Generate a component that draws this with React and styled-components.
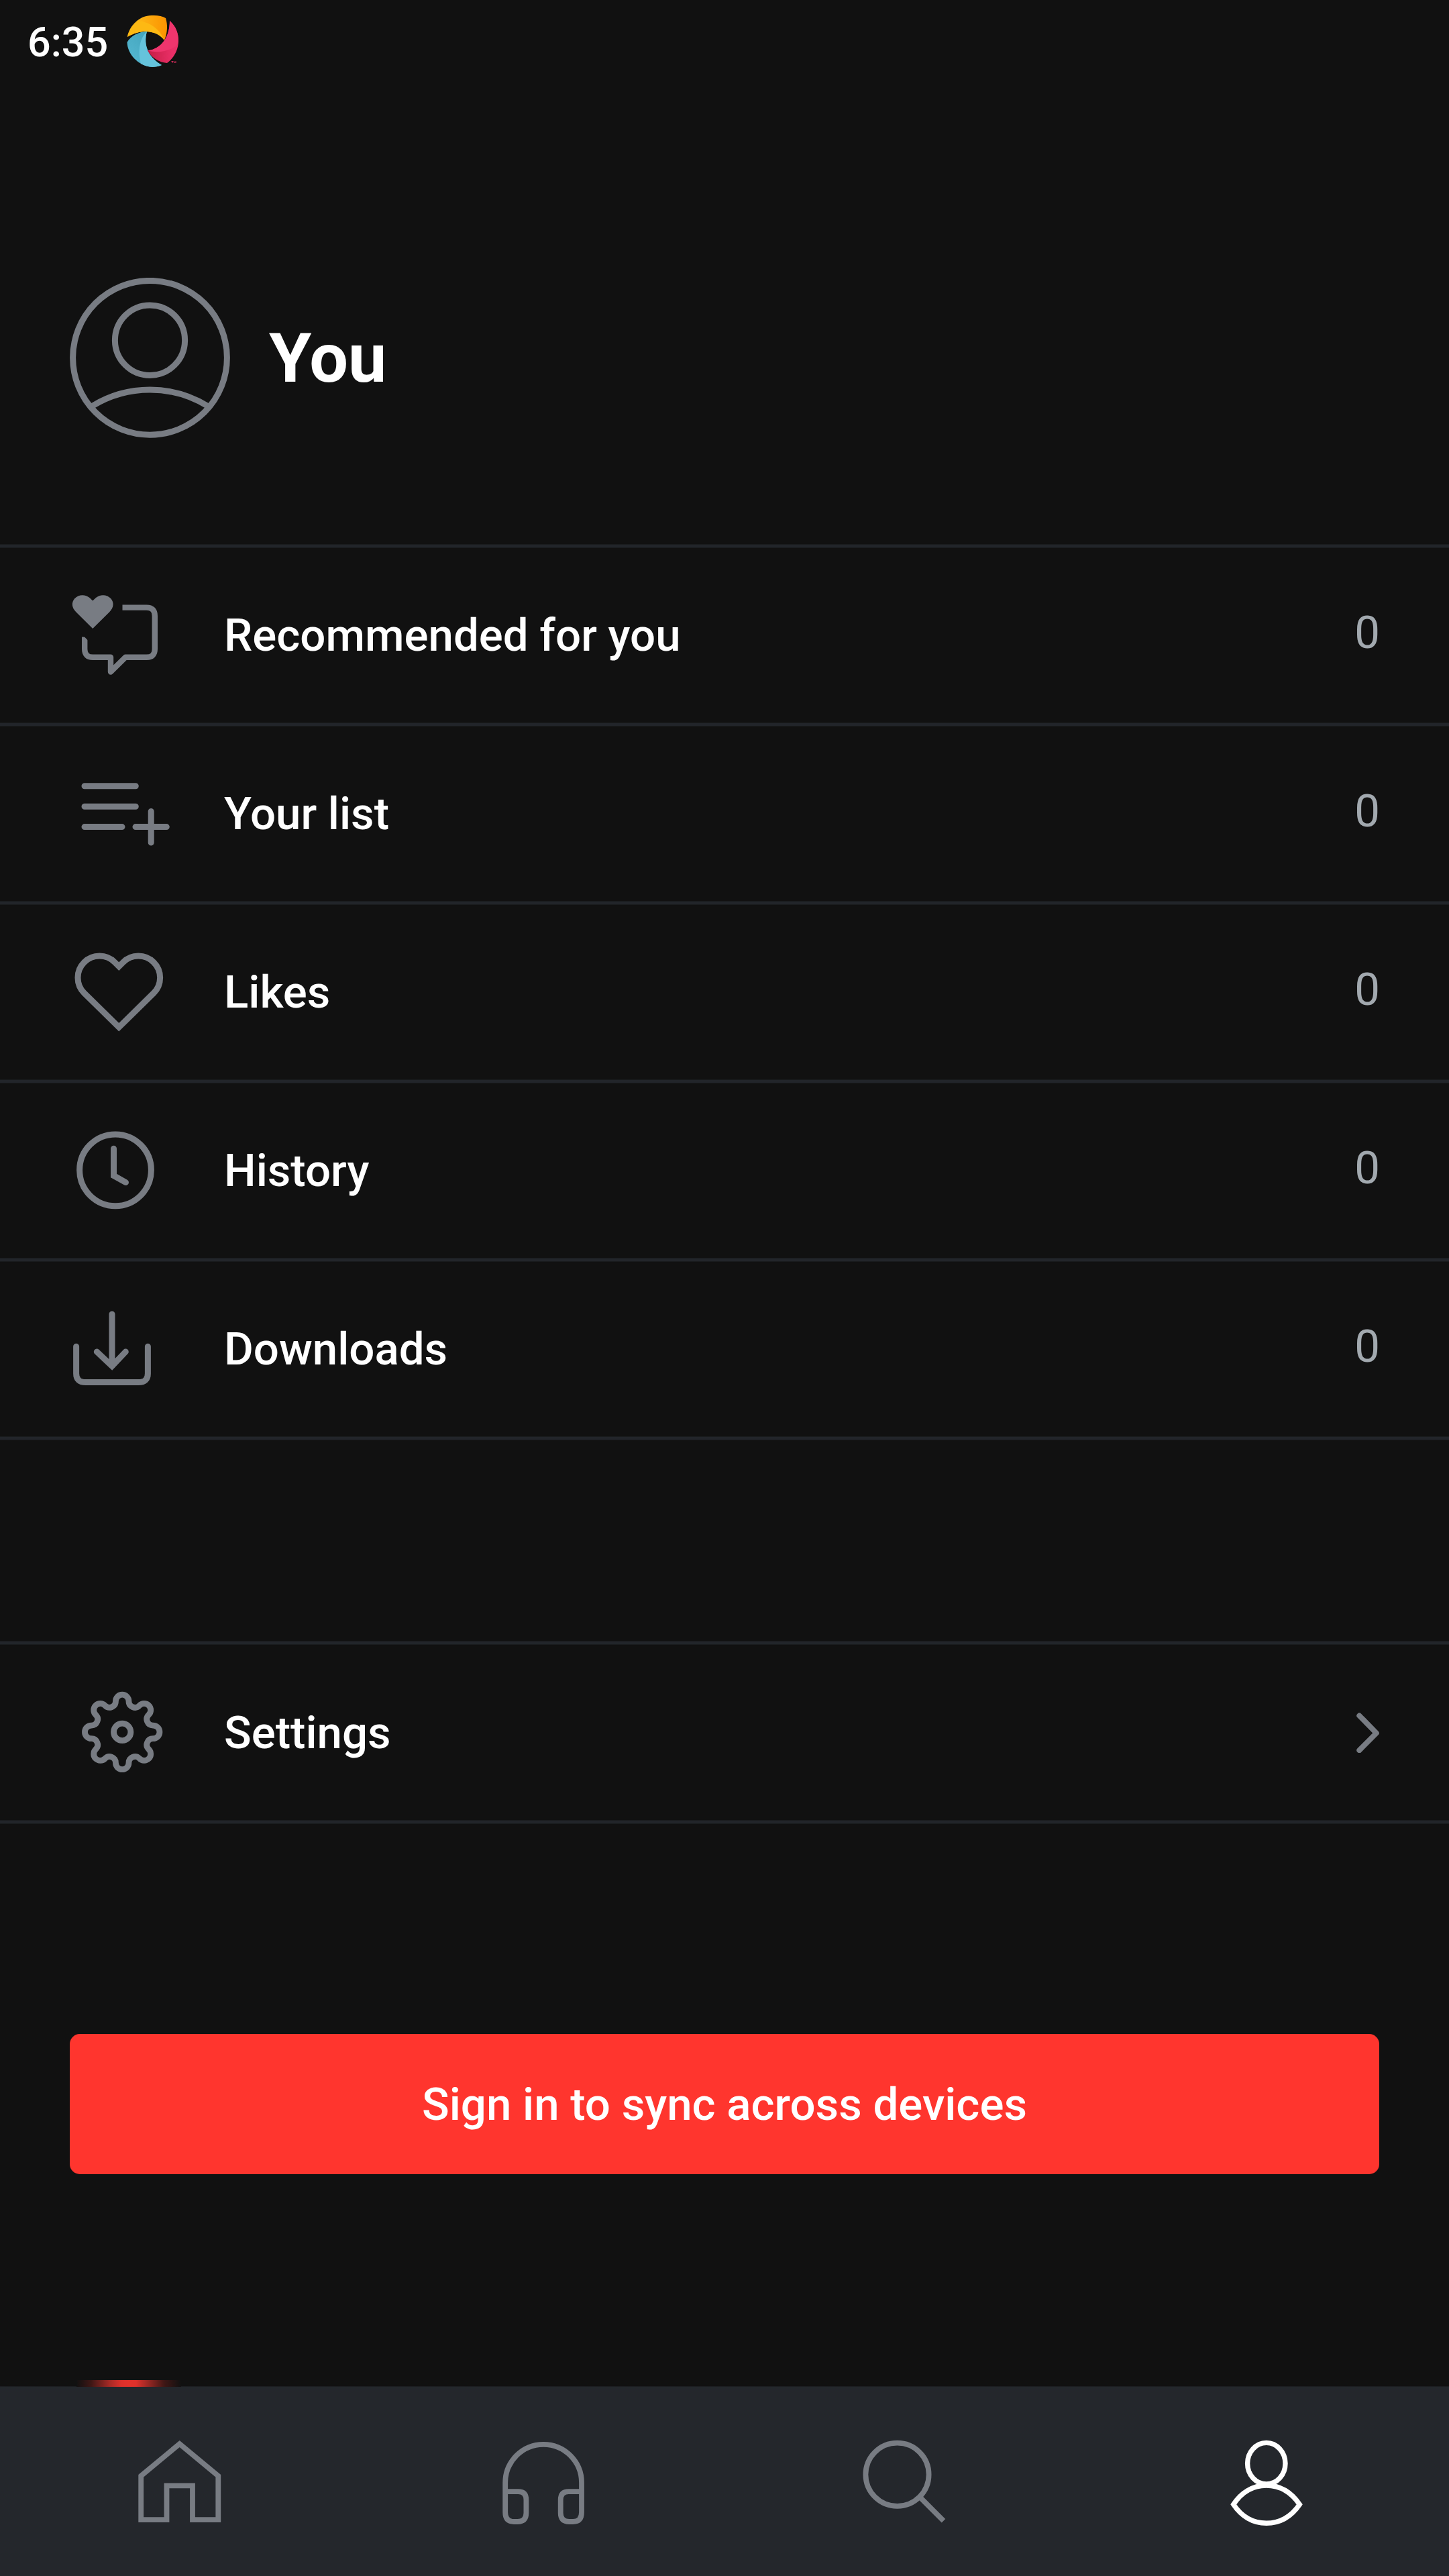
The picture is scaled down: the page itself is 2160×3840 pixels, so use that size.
import React from "react";
import styled, { createGlobalStyle } from "styled-components";

const GlobalStyle = createGlobalStyle`
  * { box-sizing: border-box; }
  body { margin: 0; background: #111111; }
`;

const Screen = styled.div`
  display: flex;
  flex-direction: column;
  width: 2160px;
  height: 3840px;
  overflow: hidden;
  background: #111111;
  color: #ffffff;
  font-family: Roboto, "Noto Sans", sans-serif;
`;

const StatusBar = styled.header`
  display: flex;
  align-items: center;
  flex: none;
  gap: 25px;
  height: 122px;
  padding-left: 41px;
`;

const Clock = styled.time`
  width: 122px;
  padding-top: 4px;
  font-size: 61px;
  font-weight: 500;
  line-height: 72px;
  white-space: nowrap;
`;

const Profile = styled.section`
  display: flex;
  align-items: center;
  flex: none;
  height: 689px;
  padding: 134px 104px 0;
  gap: 58px;
`;

const ProfileName = styled.h1`
  margin: 0;
  font-size: 102.4px;
  font-weight: 700;
  line-height: 120px;
`;

const Menu = styled.nav`
  display: flex;
  flex-direction: column;
  flex: none;
  margin-bottom: ${(p) => p.$gap}px;
`;

const Divider = styled.div`
  height: 6px;
  background: #22252a;
  border-top: 1px solid #191b1d;
  border-bottom: 1px solid #191b1d;
`;

const Row = styled.div`
  display: flex;
  align-items: center;
  height: ${(p) => p.$height || 260}px;
  padding: 0 103px 0 90px;
`;

const RowLabel = styled.span`
  flex: 1;
  padding-left: 44px;
  font-size: 67.2px;
  font-weight: 500;
  line-height: 80px;
`;

const Count = styled.span`
  padding-bottom: 9px;
  font-size: 67.2px;
  line-height: 80px;
  color: #a2a9af;
`;

const Icon = styled.svg`
  display: block;
  flex: none;
  fill: none;
  stroke: ${(p) => p.$color || "#787c83"};
  stroke-width: ${(p) => p.$weight || 9};
`;

const SignInButton = styled.button`
  flex: none;
  height: 209px;
  margin: 0 104px;
  padding: 0;
  border: 0;
  border-radius: 15px;
  background: #ff352e;
  color: #ffffff;
  font-family: inherit;
  font-size: 67.2px;
  font-weight: 500;
  line-height: 80px;
`;

const Glow = styled.div`
  flex: none;
  z-index: 1;
  width: 156px;
  height: 10px;
  margin: auto 0 -1px 114px;
  background: linear-gradient(
    90deg,
    #111111 0%,
    #3e1715 14%,
    #a82a26 32%,
    #dd302b 43%,
    #e2312b 50%,
    #dd302b 57%,
    #a82a26 66%,
    #3e1715 84%,
    #111111 100%
  );
`;

const TabBar = styled.footer`
  display: grid;
  grid-template-columns: repeat(4, 540px);
  flex: none;
  height: 283px;
  border-top: 1px solid #1c1e21;
  background: #24272c;
`;

const gearPath = (() => {
  const toothDist = 46.1;
  const valleyDist = 49.6;
  const point = (dist, deg) => {
    const a = (deg * Math.PI) / 180;
    return [dist * Math.sin(a), -dist * Math.cos(a)];
  };
  const [vx, vy] = point(valleyDist, 22.5);
  const span = Math.hypot(vx, vy + toothDist);
  const toothR = span * 0.515;
  const valleyR = span - toothR;
  const mix = (a, b) => {
    const t = toothR / span;
    return `${(a[0] + (b[0] - a[0]) * t).toFixed(2)} ${(a[1] + (b[1] - a[1]) * t).toFixed(2)}`;
  };
  let d = `M${mix(point(toothDist, 0), point(valleyDist, -22.5))}`;
  for (let k = 0; k < 8; k += 1) {
    const tooth = point(toothDist, k * 45);
    const valley = point(valleyDist, k * 45 + 22.5);
    const next = point(toothDist, (k + 1) * 45);
    d += `A${toothR} ${toothR} 0 1 1 ${mix(tooth, valley)}`;
    d += `A${valleyR} ${valleyR} 0 0 0 ${mix(next, valley)}`;
  }
  return `${d}Z`;
})();

const BrandIcon = () => (
  <svg width="80" height="80" viewBox="188 21 80 80">
    <defs>
      <linearGradient id="amber" x1="0" x2="1">
        <stop offset="0.3" stopColor="#fdb515" />
        <stop offset="1" stopColor="#fb9300" />
      </linearGradient>
      <linearGradient id="teal" x1="1" y1="0" x2="0" y2="1">
        <stop offset="0" stopColor="#3d9fb8" />
        <stop offset="1" stopColor="#58bad3" />
      </linearGradient>
      <linearGradient id="rose" x1="0" x2="1">
        <stop offset="0" stopColor="#c41d45" />
        <stop offset="0.8" stopColor="#ea2f67" />
      </linearGradient>
    </defs>
    <path fill="url(#amber)" d="M190 55C193 38 208 23 226 23C235 22.500 242 24 247 27C250 36 250 49 245 60C236 47 213 41 190 55Z" />
    <path fill="#fdb913" d="M190 55C192 45 198 37 206 31C224 33 238 43 245 60C236 47 213 41 190 55Z" />
    <path fill="url(#teal)" d="M219 47C208 47 195 53 189.500 63C190 80 205 98 227 100C231 100 237 99 241 97C222 86 213 68 219 47Z" />
    <path fill="#65c3dc" d="M219 47C208 57 205 76 210 95C221 101 232 101 241 97C222 86 213 68 219 47Z" />
    <path fill="url(#rose)" d="M253 31C262 39 266 49 266 61C266 74 259 87 249 94C237 93 226 86 220 75.500C240 73 253 56 253 31Z" />
    <path fill="#ef356d" d="M253 31C262 39 266 49 266 61C265 65 264 67 262 69C250 77 235 79 220 75.500C240 73 253 56 253 31Z" />
    <path stroke="#d02b58" strokeWidth="1" fill="none" d="M255.500 91.500H258.500M257 91.500V94M259.500 94V91.500L260.700 93.200L262 91.500V94" />
  </svg>
);

const AvatarIcon = () => (
  <Icon width="239" height="239" viewBox="104 414 239 239">
    <circle cx="223.500" cy="533.300" r="114.900" />
    <ellipse cx="223.500" cy="507.200" rx="52.100" ry="52.300" />
    <path d="M138 605A164.400 164.400 0 0 1 309 605" />
  </Icon>
);

const RecommendedIcon = () => (
  <Icon width="200" height="260" viewBox="90 817 200 260" $weight={8.4}>
    <path
      fill="#787c83"
      stroke="none"
      d="M138.200 937L113.500 912.500C106.500 905.500 106.500 898 111 892.500C117 885.800 127 885.500 133.500 891L138.200 895.500L143 891C149.500 885.500 159.500 885.800 165.500 892.500C170 898 170 905.500 163 912.500Z"
    />
    <path d="M182.500 905.600H218.500Q230.800 905.600 230.800 918V967.500Q230.800 979.800 218.500 979.800H187L165 1001.500V979.800H138.500Q126.200 979.800 126.200 967.500V949.500" strokeLinejoin="round" />
    <path fill="#111111" stroke="none" d="M120 943.500L132 955.500V943.500Z" />
  </Icon>
);

const ListIcon = () => (
  <Icon width="200" height="260" viewBox="90 1083 200 260" strokeLinecap="round">
    <path d="M126 1171.800H202.300M126 1202.200H202.300M126 1232.600H182M202 1232.600H248.300M225.200 1209.500V1256" />
  </Icon>
);

const HeartIcon = () => (
  <Icon width="200" height="260" viewBox="90 1349 200 260">
    <path d="M177.300 1531.300L125.400 1480.200A32.300 32.300 0 0 1 171.200 1434.600L177.300 1440.700L183.400 1434.600A32.300 32.300 0 0 1 229.200 1480.200Z" />
  </Icon>
);

const HistoryIcon = () => (
  <Icon width="200" height="260" viewBox="90 1615 200 260" strokeLinecap="round">
    <circle cx="172" cy="1744.300" r="53.400" />
    <path d="M169.500 1712.200V1752.500L187.500 1762.600" />
  </Icon>
);

const DownloadIcon = () => (
  <Icon width="200" height="260" viewBox="90 1881 200 260" strokeLinecap="round">
    <path d="M167 1959V2034M144.300 2015L167 2036.400L187.300 2015" />
    <path d="M113.600 2007.200V2047.500Q113.600 2060.600 127.500 2060.600H206.500Q220.400 2060.600 220.400 2047.500V2007.200" />
  </Icon>
);

const SettingsIcon = () => (
  <Icon width="200" height="261" viewBox="90 2452 200 261" $weight={8.8}>
    <g transform="translate(182.200 2581.900)">
      <path d={gearPath} />
      <circle r="12.700" />
    </g>
  </Icon>
);

const ChevronIcon = () => (
  <Icon width="37" height="60" viewBox="2020 2552.500 37 60" $weight={8} strokeLinecap="round" strokeLinejoin="round">
    <path d="M2026.300 2557L2051.800 2583L2026.300 2608.600" />
  </Icon>
);

const TabIcon = ({ left, active, children }) => (
  <Icon
    width="540"
    height="282"
    viewBox={`${left} 3558 540 282`}
    $color={active ? "#ffffff" : undefined}
    $weight={active ? 7.4 : 7.8}
  >
    {children}
  </Icon>
);

const library = [
  { label: "Recommended for you", icon: RecommendedIcon },
  { label: "Your list", icon: ListIcon },
  { label: "Likes", icon: HeartIcon },
  { label: "History", icon: HistoryIcon },
  { label: "Downloads", icon: DownloadIcon },
];

export default function App() {
  return (
    <Screen>
      <GlobalStyle />
      <StatusBar>
        <Clock>6:35</Clock>
        <BrandIcon />
      </StatusBar>
      <Profile>
        <AvatarIcon />
        <ProfileName>You</ProfileName>
      </Profile>
      <Menu $gap={299}>
        <Divider />
        {library.map(({ label, icon: Glyph }) => (
          <React.Fragment key={label}>
            <Row>
              <Glyph />
              <RowLabel>{label}</RowLabel>
              <Count>0</Count>
            </Row>
            <Divider />
          </React.Fragment>
        ))}
      </Menu>
      <Menu $gap={313}>
        <Divider />
        <Row $height={261}>
          <SettingsIcon />
          <RowLabel>Settings</RowLabel>
          <ChevronIcon />
        </Row>
        <Divider />
      </Menu>
      <SignInButton type="button">Sign in to sync across devices</SignInButton>
      <Glow />
      <TabBar>
        <TabIcon left={0}>
          <path d="M210.200 3690.800L267.700 3643L325.300 3690.800V3756.200H287V3705.400H248.500V3756.200H210.200Z" />
        </TabIcon>
        <TabIcon left={540}>
          <path d="M753.200 3714.200H772.500Q784.400 3714.200 784.400 3726.500V3746Q784.400 3759 771.500 3759H766Q753.200 3759 753.200 3745V3700.800A56.900 56.900 0 0 1 867 3700.800V3745Q867 3759 854.200 3759H848.500Q835.700 3759 835.700 3746V3726.500Q835.700 3714.200 847.700 3714.200H867" />
        </TabIcon>
        <TabIcon left={1080}>
          <circle cx="1337.500" cy="3688.800" r="47.100" />
          <path d="M1370.800 3722L1406.500 3757.700" />
        </TabIcon>
        <TabIcon left={1620} active>
          <ellipse cx="1887.800" cy="3672.200" rx="28.200" ry="30.800" />
          <path d="M1838.700 3733.300C1850 3716 1867 3705 1887.800 3705S1925.500 3716 1937.300 3733.300C1925.500 3750.500 1908.500 3761.200 1887.800 3761.200S1850 3750.500 1838.700 3733.300Z" />
        </TabIcon>
      </TabBar>
    </Screen>
  );
}
